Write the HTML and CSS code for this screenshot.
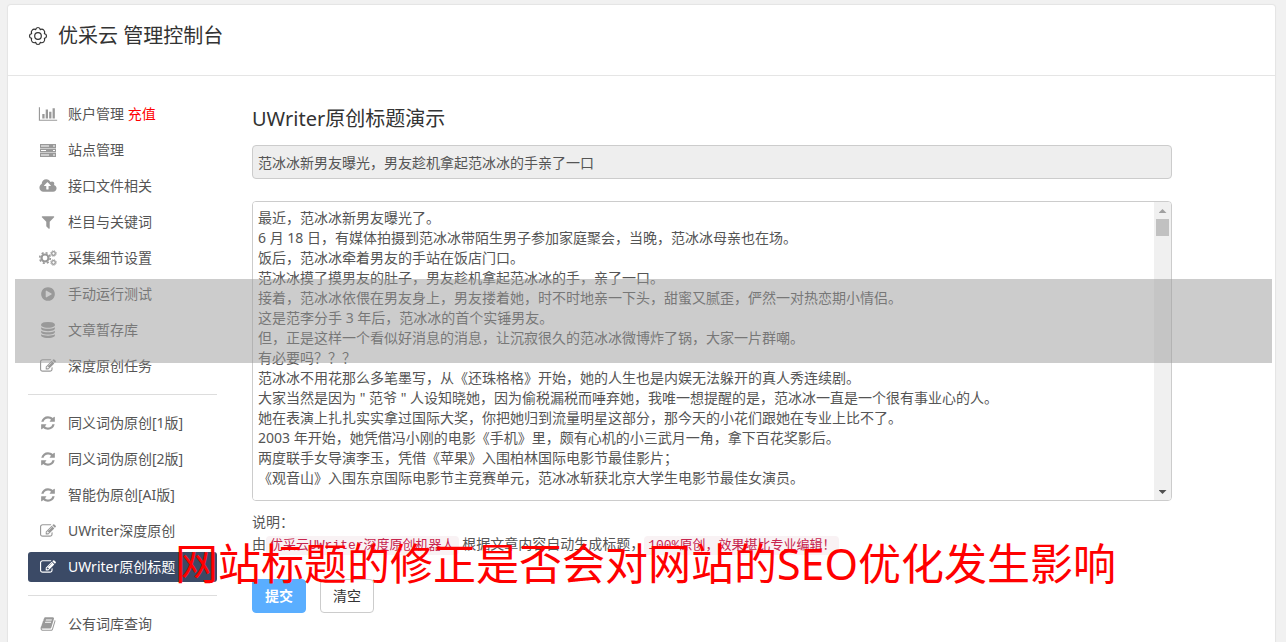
FILE: index.html
```
<!DOCTYPE html>
<html lang="zh-CN">
<head>
<meta charset="UTF-8">
<meta name="viewport" content="width=device-width, initial-scale=1.0">
<title>优采云 管理控制台</title>
<link rel="stylesheet" href="styles.css">
</head>
<body>

<svg class="sprite" aria-hidden="true">
    <symbol id="i-gear" viewBox="0 0 20 20">
        <path d="M10 1.500Q12 1.500 12.300 3.600Q14.300 2.600 15.800 4.200Q17.300 5.700 16.400 7.600Q18.500 8 18.500 10Q18.500 12 16.400 12.400Q17.300 14.300 15.800 15.800Q14.300 17.300 12.300 16.400Q12 18.500 10 18.500Q8 18.500 7.700 16.400Q5.700 17.300 4.200 15.800Q2.700 14.300 3.600 12.400Q1.500 12 1.500 10Q1.500 8 3.600 7.600Q2.700 5.700 4.200 4.200Q5.700 2.600 7.700 3.600Q8 1.500 10 1.500z" fill="none" stroke="currentColor" stroke-width="1.200" stroke-linejoin="round"/>
        <circle cx="10" cy="10" r="3.300" fill="none" stroke="currentColor" stroke-width="1.200"/>
    </symbol>
    <symbol id="i-chart" viewBox="0 0 2048 1792"><path d="M640 896v512h-256v-512h256zm384-512v1024h-256v-1024h256zm1024 1152v128h-2048v-1536h128v1408h1920zm-640-896v768h-256v-768h256zm384-384v1152h-256v-1152h256z"/></symbol>
    <symbol id="i-server" viewBox="0 0 20 16">
        <path d="M2 2h16v4H2zM2 6.500h16v4H2zM2 11h16v4H2z"/>
        <path d="M3 3.500h8v1H3zM3 8h5v1H3zM3 12.500h8v1H3zM15 3.500h2v1h-2zM15 8h2v1h-2zM15 12.500h2v1h-2z" fill="#fff"/>
    </symbol>
    <symbol id="i-upload" viewBox="0 0 1920 1792"><path d="M1280 864q0-14-9-23l-352-352q-9-9-23-9t-23 9l-351 351q-10 12-10 24 0 14 9 23t23 9h224v352q0 13 9.500 22.500t22.500 9.500h192q13 0 22.500-9.500t9.500-22.500v-352h224q13 0 22.500-9.500t9.500-22.500zm640 288q0 159-112.500 271.500t-271.500 112.500h-1088q-185 0-316.500-131.500t-131.500-316.500q0-130 70-240t188-165q-2-30-2-43 0-212 150-362t362-150q156 0 285.500 87t188.500 231q71-62 166-62 106 0 181 75t75 181q0 76-41 138 130 31 213.500 135.500t83.500 238.500z"/></symbol>
    <symbol id="i-filter" viewBox="0 0 1792 1792"><path d="M1595 295q17 41-14 70l-493 493v742q0 42-39 59-13 5-25 5-27 0-45-19l-256-256q-19-19-19-45v-486l-493-493q-31-29-14-70 17-39 59-39h1280q42 0 59 39z"/></symbol>
    <symbol id="i-cogs" viewBox="0 0 18 16">
        <g fill="none" stroke="currentColor">
            <circle cx="6" cy="8" r="3.500" stroke-width="2.200"/>
            <circle cx="6" cy="8" r="5.300" stroke-width="1.600" stroke-dasharray="2.080 2.080"/>
            <circle cx="14.500" cy="3.500" r="1.800" stroke-width="1.300"/>
            <circle cx="14.500" cy="3.500" r="2.800" stroke-width="1" stroke-dasharray="1.100 1.100"/>
            <circle cx="14.500" cy="12.500" r="1.800" stroke-width="1.300"/>
            <circle cx="14.500" cy="12.500" r="2.800" stroke-width="1" stroke-dasharray="1.100 1.100"/>
        </g>
    </symbol>
    <symbol id="i-play" viewBox="0 0 1792 1792"><path d="M896 128q209 0 385.500 103t279.500 279.500 103 385.500-103 385.500-279.500 279.500-385.500 103-385.500-103-279.500-279.500-103-385.500 103-385.500 279.500-279.500 385.500-103zm384 823q32-18 32-55t-32-55l-544-320q-31-19-64-1-32 19-32 56v640q0 37 32 56 16 8 32 8 17 0 32-9z"/></symbol>
    <symbol id="i-database" viewBox="0 0 1792 1792"><path d="M896 768q237 0 443-43t325-127v170q0 69-103 128t-280 93.500-385 34.500-385-34.500-280-93.500-103-128v-170q119 84 325 127t443 43zm0 768q237 0 443-43t325-127v170q0 69-103 128t-280 93.500-385 34.500-385-34.500-280-93.500-103-128v-170q119 84 325 127t443 43zm0-384q237 0 443-43t325-127v170q0 69-103 128t-280 93.500-385 34.500-385-34.500-280-93.500-103-128v-170q119 84 325 127t443 43zm0-1152q208 0 385 34.500t280 93.500 103 128v128q0 69-103 128t-280 93.500-385 34.500-385-34.500-280-93.500-103-128v-128q0-69 103-128t280-93.500 385-34.500z"/></symbol>
    <symbol id="i-edit" viewBox="0 0 1792 1792"><path d="M888 1184l116-116-152-152-116 116v56h96v96h56zm440-720q-16-16-33 1l-350 350q-17 17-1 33t33-1l350-350q17-17 1-33zm80 594v190q0 119-84.500 203.500t-203.500 84.500h-832q-119 0-203.500-84.500t-84.500-203.500v-832q0-119 84.500-203.500t203.500-84.500h832q63 0 117 25 15 7 18 23 3 17-9 29l-49 49q-14 14-32 8-23-6-45-6h-832q-66 0-113 47t-47 113v832q0 66 47 113t113 47h832q66 0 113-47t47-113v-126q0-13 9-22l64-64q15-15 35-7t20 29zm-96-738l288 288-672 672h-288v-288zm444 132l-92 92-288-288 92-92q28-28 68-28t68 28l152 152q28 28 28 68t-28 68z"/></symbol>
    <symbol id="i-refresh" viewBox="0 0 1792 1792"><path d="M1639 1056q0 5-1 7-64 268-268 434.500t-478 166.500q-146 0-282.500-55t-243.500-157l-129 129q-19 19-45 19t-45-19-19-45v-448q0-26 19-45t45-19h448q26 0 45 19t19 45-19 45l-137 137q71 66 161 102t187 36q134 0 250-65t186-179q11-17 53-117 8-23 30-23h192q13 0 22.500 9.500t9.500 22.500zm25-800v448q0 26-19 45t-45 19h-448q-26 0-45-19t-19-45 19-45l138-138q-148-137-349-137-134 0-250 65t-186 179q-11 17-53 117-8 23-30 23h-199q-13 0-22.500-9.500t-9.500-22.500v-7q65-268 270-434.500t480-166.500q146 0 284 55.500t245 156.500l130-129q19-19 45-19t45 19 19 45z"/></symbol>
    <symbol id="i-book" viewBox="0 0 1792 1792"><path d="M1703 478q40 57 18 129l-275 906q-19 64-76.500 107.500t-122.500 43.500h-923q-77 0-148.500-53.500t-99.500-131.500q-24-67-2-127 0-4 3-27t4-37q1-8-3-21.500t-3-19.500q2-11 8-21t16.500-23.500 16.500-23.500q23-38 45-91.500t30-91.500q3-10 .5-30t-.5-28q3-11 17-28t17-23q21-36 42-92t25-90q1-9-2.500-32t.5-28q4-13 22-30.500t22-22.500q19-26 42.500-84.500t27.500-96.500q1-8-3-25.500t-2-26.500q2-8 9-18t18-23 17-21q8-12 16.500-30.500t15-35 16-36 19.500-32 26.500-23.500 36-11.500 47.500 5.500l-1 3q38-9 51-9h761q74 0 114 56t18 130l-274 906q-36 119-71.500 153.500t-128.500 34.500h-869q-27 0-38 15-11 16-1 43 24 70 144 70h923q29 0 56-15.500t35-41.500l300-987q7-22 5-57 38 15 59 43zm-1064 2q-4 13 2 22.500t20 9.500h608q13 0 25.500-9.500t16.500-22.500l21-64q4-13-2-22.500t-20-9.500h-608q-13 0-25.500 9.500t-16.500 22.500zm-83 256q-4 13 2 22.500t20 9.500h608q13 0 25.500-9.500t16.500-22.500l21-64q4-13-2-22.500t-20-9.500h-608q-13 0-25.500 9.500t-16.500 22.500z"/></symbol>
</svg>

<div class="panel">
    <header class="panel-header">
        <svg class="gear"><use href="#i-gear"/></svg>
        <h1>优采云 管理控制台</h1>
    </header>

    <div class="panel-body">
        <nav class="sidebar">
            <ul>
                <li><a href="#"><svg class="icon"><use href="#i-chart"/></svg><span>账户管理 <span class="recharge">充值</span></span></a></li>
                <li><a href="#"><svg class="icon"><use href="#i-server"/></svg>站点管理</a></li>
                <li><a href="#"><svg class="icon"><use href="#i-upload"/></svg>接口文件相关</a></li>
                <li><a href="#"><svg class="icon"><use href="#i-filter"/></svg>栏目与关键词</a></li>
                <li><a href="#"><svg class="icon"><use href="#i-cogs"/></svg>采集细节设置</a></li>
                <li><a href="#"><svg class="icon"><use href="#i-play"/></svg>手动运行测试</a></li>
                <li><a href="#"><svg class="icon"><use href="#i-database"/></svg>文章暂存库</a></li>
                <li><a href="#"><svg class="icon"><use href="#i-edit"/></svg>深度原创任务</a></li>
            </ul>
            <ul>
                <li><a href="#"><svg class="icon"><use href="#i-refresh"/></svg>同义词伪原创[1版]</a></li>
                <li><a href="#"><svg class="icon"><use href="#i-refresh"/></svg>同义词伪原创[2版]</a></li>
                <li><a href="#"><svg class="icon"><use href="#i-refresh"/></svg>智能伪原创[AI版]</a></li>
                <li><a href="#"><svg class="icon"><use href="#i-edit"/></svg>UWriter深度原创</a></li>
                <li><a href="#" class="active"><svg class="icon"><use href="#i-edit"/></svg>UWriter原创标题</a></li>
            </ul>
            <ul>
                <li><a href="#"><svg class="icon"><use href="#i-book"/></svg>公有词库查询</a></li>
            </ul>
        </nav>

        <form class="content">
            <h2><label for="title">UWriter原创标题演示</label></h2>
            <input type="text" id="title" class="title-input" value="范冰冰新男友曝光，男友趁机拿起范冰冰的手亲了一口" readonly>
            <div class="editor">
                <textarea id="article" aria-label="文章内容">最近，范冰冰新男友曝光了。
6 月 18 日，有媒体拍摄到范冰冰带陌生男子参加家庭聚会，当晚，范冰冰母亲也在场。
饭后，范冰冰牵着男友的手站在饭店门口。
范冰冰摸了摸男友的肚子，男友趁机拿起范冰冰的手，亲了一口。
接着，范冰冰依偎在男友身上，男友搂着她，时不时地亲一下头，甜蜜又腻歪，俨然一对热恋期小情侣。
这是范李分手 3 年后，范冰冰的首个实锤男友。
但，正是这样一个看似好消息的消息，让沉寂很久的范冰冰微博炸了锅，大家一片群嘲。
有必要吗？？？
范冰冰不用花那么多笔墨写，从《还珠格格》开始，她的人生也是内娱无法躲开的真人秀连续剧。
大家当然是因为 " 范爷 " 人设知晓她，因为偷税漏税而唾弃她，我唯一想提醒的是，范冰冰一直是一个很有事业心的人。
她在表演上扎扎实实拿过国际大奖，你把她归到流量明星这部分，那今天的小花们跟她在专业上比不了。
2003 年开始，她凭借冯小刚的电影《手机》里，颇有心机的小三武月一角，拿下百花奖影后。
两度联手女导演李玉，凭借《苹果》入围柏林国际电影节最佳影片；
《观音山》入围东京国际电影节主竞赛单元，范冰冰斩获北京大学生电影节最佳女演员。</textarea>
                <div class="scrollbar" aria-hidden="true">
                    <span class="arrow arrow-up"></span>
                    <span class="thumb"></span>
                    <span class="arrow arrow-down"></span>
                </div>
            </div>
            <p class="note">说明：<br>由<code>优采云UWriter深度原创机器人</code> 根据文章内容自动生成标题，<code>100%原创，效果堪比专业编辑！</code></p>
            <div class="buttons">
                <button type="submit" class="btn btn-primary">提交</button>
                <button type="reset" class="btn">清空</button>
            </div>
        </form>
    </div>
</div>

<div class="band"></div>
<div class="caption">网站标题的修正是否会对网站的SEO优化发生影响</div>

</body>
</html>
```
FILE: styles.css
```
* {
    box-sizing: border-box;
}

html {
    height: 100%;
    overflow: hidden;
}

body {
    height: 100%;
    margin: 0;
    padding: 5px 11px 0 8px;
    overflow: hidden;
    background-color: #f1f1f1;
    color: #555;
    font-family: "Noto Sans", "Noto Sans CJK SC", sans-serif;
    font-size: 14px;
    line-height: 20px;
}

h1,
h2,
ul,
p {
    margin: 0;
    padding: 0;
    font-weight: normal;
}

.sprite {
    display: none;
}

.panel {
    min-height: 100%;
    border-radius: 3px;
    background-color: #fff;
    box-shadow: 0 0 1px 1px #e4e4e4;
}

.panel-header {
    display: flex;
    align-items: center;
    gap: 10px;
    height: 71px;
    padding: 0 20px 8px;
    border-bottom: 1px solid #e5e5e5;
    color: #333;
}

.panel-header h1 {
    font-size: 20px;
    line-height: 30px;
}

.gear {
    width: 20px;
    height: 20px;
}

.panel-body {
    display: flex;
    gap: 35px;
    padding: 20px;
}

/* sidebar */
.sidebar {
    flex: none;
    width: 189px;
}

.sidebar ul {
    list-style: none;
}

.sidebar ul + ul {
    margin-top: 10px;
    padding-top: 10px;
    border-top: 1px solid #ddd;
}

.sidebar li {
    padding: 3px 0;
}

.sidebar a {
    display: flex;
    align-items: center;
    gap: 10px;
    height: 30px;
    padding: 0 10px;
    border-radius: 3px;
    color: #555;
    text-decoration: none;
    white-space: nowrap;
}

.sidebar .icon {
    width: 20px;
    height: 16px;
    color: #999;
    fill: currentColor;
}

.sidebar a.active,
.sidebar a.active .icon {
    color: #fff;
}

.sidebar a.active {
    background-color: #3b4a66;
}

.recharge {
    color: #f00;
}

/* content */
.content {
    flex: 1;
    max-width: 920px;
    padding-top: 8px;
}

.content h2 {
    margin-bottom: 11px;
    color: #333;
    font-size: 20px;
    line-height: 30px;
}

.title-input,
.editor {
    width: 100%;
    border: 1px solid #ccc;
    border-radius: 4px;
}

.title-input {
    display: block;
    height: 34px;
    margin-bottom: 22px;
    padding: 0 5px;
    background-color: #eee;
    color: #555;
    font: inherit;
}

.editor {
    display: flex;
    height: 300px;
    margin-bottom: 10px;
    overflow: hidden;
}

.editor textarea {
    flex: 1;
    padding: 6px 5px;
    border: 0;
    background-color: #fff;
    color: #555;
    font: inherit;
    resize: none;
}

.scrollbar {
    display: flex;
    flex-direction: column;
    align-items: center;
    width: 17px;
    padding: 7px 0 6px;
    background-color: #f0f0f0;
}

.scrollbar .thumb {
    width: 13px;
    height: 17px;
    margin: 6px 0 auto;
    background-color: #c1c1c1;
}

.arrow {
    width: 8px;
    height: 4px;
}

.arrow-up {
    background-color: #a0a0a0;
    clip-path: polygon(50% 0, 100% 100%, 0 100%);
}

.arrow-down {
    background-color: #505050;
    clip-path: polygon(0 0, 100% 0, 50% 100%);
}

.note {
    line-height: 22px;
}

.note code {
    padding: 2px 4px;
    border-radius: 4px;
    background-color: #f9f2f4;
    color: #c7254e;
    font-family: "Liberation Mono", "Noto Sans CJK SC", monospace;
    font-size: 13px;
}

.buttons {
    display: flex;
    gap: 14px;
    margin-top: 22px;
}

.btn {
    width: 54px;
    height: 34px;
    padding: 0;
    border: 1px solid #ccc;
    border-radius: 4px;
    background-color: #fff;
    color: #333;
    font: inherit;
    cursor: pointer;
}

.btn-primary {
    border-color: #5aaeff;
    background-color: #5aaeff;
    color: #fff;
    font-weight: bold;
}

/* banner over the page */
.band {
    position: absolute;
    top: 279px;
    left: 15px;
    right: 14px;
    height: 84px;
    background-color: rgba(153, 153, 153, 0.5);
}

.caption {
    position: absolute;
    top: 534px;
    left: 0;
    width: 100%;
    padding-left: 5px;
    color: #f00;
    font-size: 43px;
    line-height: 60px;
    text-align: center;
    white-space: nowrap;
}
```
